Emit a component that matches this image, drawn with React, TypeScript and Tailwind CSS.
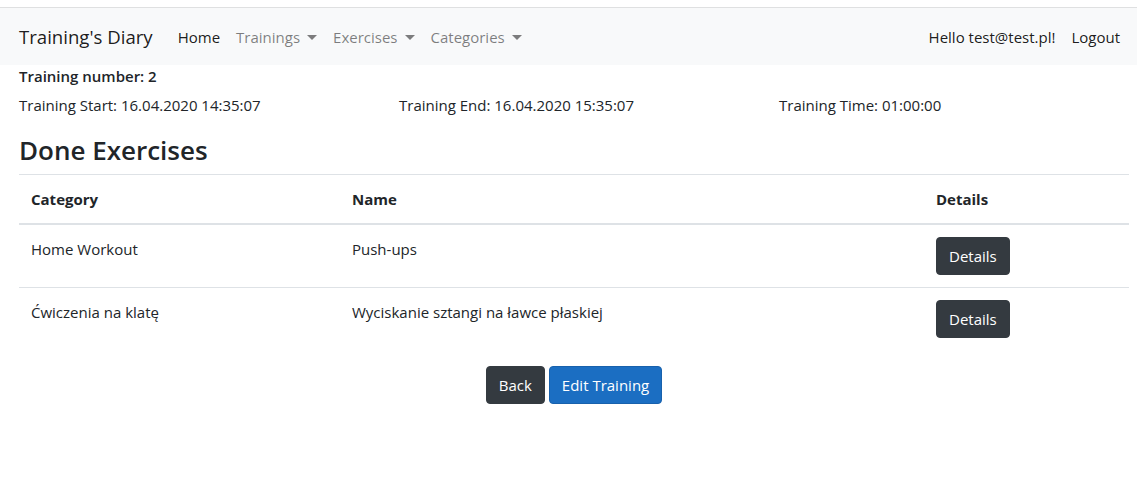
import React from "react";

const font = { fontFamily: '"Open Sans", "Noto Sans", sans-serif' };

function Caret() {
  return (
    <span className="ml-[7px] inline-block h-0 w-0 align-[0.2em] border-t-[5px] border-x-[5px] border-t-current border-x-transparent" />
  );
}

function Btn({ children, primary }: { children: React.ReactNode; primary?: boolean }) {
  return (
    <button
      className={
        primary
          ? "h-[38px] rounded-[4px] border border-[#1861ac] bg-[#1b6ec2] px-[12px] text-[15px] leading-[24px] text-white"
          : "h-[38px] rounded-[4px] border border-[#343a40] bg-[#343a40] px-[12px] text-[15px] leading-[24px] text-white"
      }
    >
      {children}
    </button>
  );
}

export default function App() {
  const rows = [
    { cat: "Home Workout", name: "Push-ups" },
    { cat: "Ćwiczenia na klatę", name: "Wyciskanie sztangi na ławce płaskiej" },
  ];
  return (
    <div className="min-h-[482px] bg-white text-[15px] leading-[24px] text-[#212529]" style={font}>
      <div className="h-[8px] border-b border-[#dfe0e1]" />
      <nav className="flex h-[57px] items-center bg-[#f8f9fa] pl-[19px] pr-[9px]">
        <span className="mr-[17px] text-[18.6px] leading-[30px] text-[rgba(0,0,0,0.9)]">Training's Diary</span>
        <div className="flex items-center">
          <span className="px-[8px] text-[rgba(0,0,0,0.9)]">Home</span>
          <span className="px-[8px] text-[rgba(0,0,0,0.5)]">
            Trainings
            <Caret />
          </span>
          <span className="px-[8px] text-[rgba(0,0,0,0.5)]">
            Exercises
            <Caret />
          </span>
          <span className="px-[8px] text-[rgba(0,0,0,0.5)]">
            Categories
            <Caret />
          </span>
        </div>
        <div className="ml-auto flex items-center">
          <span className="px-[8px] text-[rgba(0,0,0,0.9)]">Hello test@test.pl!</span>
          <span className="px-[8px] text-[rgba(0,0,0,0.9)]">Logout</span>
        </div>
      </nav>
      <main className="pl-[19px] pr-[8px]">
        <div className="font-semibold leading-[22px]">Training number: 2</div>
        <div className="mt-[6px] grid grid-cols-[380px_380px_1fr]">
          <div>Training Start: 16.04.2020 14:35:07</div>
          <div>Training End: 16.04.2020 15:35:07</div>
          <div>Training Time: 01:00:00</div>
        </div>
        <h3 className="mt-[16px] mb-[7px] text-[26px] font-semibold leading-[34px]">Done Exercises</h3>
        <table className="w-full table-fixed border-collapse">
          <colgroup>
            <col className="w-[321px]" />
            <col className="w-[584px]" />
            <col />
          </colgroup>
          <thead>
            <tr className="border-t border-[#dee2e6]">
              <th className="border-b-2 border-[#dee2e6] p-[12px] text-left align-bottom font-bold">Category</th>
              <th className="border-b-2 border-[#dee2e6] p-[12px] text-left align-bottom font-bold">Name</th>
              <th className="border-b-2 border-[#dee2e6] p-[12px] text-left align-bottom font-bold">Details</th>
            </tr>
          </thead>
          <tbody>
            {rows.map((r, i) => (
              <tr key={i} className={i > 0 ? "border-t border-[#dee2e6]" : ""}>
                <td className="p-[12px] align-top">{r.cat}</td>
                <td className="p-[12px] align-top">{r.name}</td>
                <td className="p-[12px] align-top">
                  <Btn>Details</Btn>
                </td>
              </tr>
            ))}
          </tbody>
        </table>
        <div className="mt-[16px] flex justify-center gap-[4px]">
          <Btn>Back</Btn>
          <Btn primary>Edit Training</Btn>
        </div>
      </main>
    </div>
  );
}
